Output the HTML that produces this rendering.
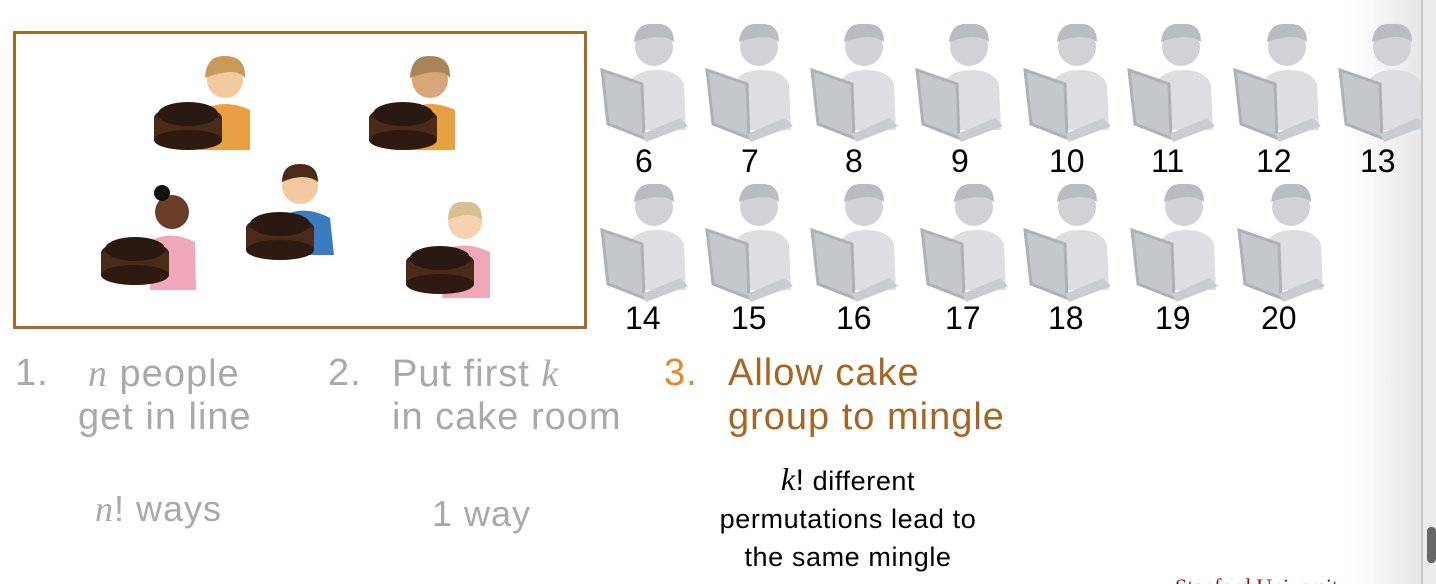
<!DOCTYPE html>
<html><head><meta charset="utf-8"><style>
html,body{margin:0;width:1436px;height:584px;overflow:hidden;background:#fff}
body{font-family:"Liberation Sans",sans-serif;position:relative}
.a{position:absolute;white-space:nowrap}
.box{position:absolute;left:13px;top:31px;width:568px;height:292px;border:3px solid #a86a28}
.g{color:#a9a9a9;font-size:38px;letter-spacing:1px}
.o{color:#e08a2e;font-size:38px;letter-spacing:1px}
.b{color:#a8651f;font-size:38px;letter-spacing:1px}
.num{font-size:32px;color:#000}
i{font-family:"Liberation Serif",serif}
</style></head><body>
<svg width="1436" height="584" style="position:absolute;left:0;top:0">
<defs>
<linearGradient id="gr" x1="0" x2="1"><stop offset="0" stop-color="#fff"/><stop offset="1" stop-color="#e6e6e6"/></linearGradient>
<g id="p">
<circle cx="4" cy="-45" r="19" fill="#d0d2d6"/>
<path d="M-16,-50 Q-14,-70 4,-68 Q24,-70 24,-50 Q12,-60 -16,-50Z" fill="#b9bcc1"/>
<path d="M-20,38 L-22,-8 Q-14,-22 6,-22 Q28,-22 34,-8 L36,38Z" fill="#dcdee1"/>
<path d="M-48,-22 L-8,-8 L-6,46 L-42,32Z" fill="#c4c7cc" stroke="#aeb1b6" stroke-width="3"/>
<path d="M-8,42 L30,26 L38,34 L-4,50Z" fill="#c9ccd0"/>
</g>
<g id="c">
<ellipse cx="0" cy="0" rx="34" ry="12" fill="#3a2216"/>
<rect x="-34" y="0" width="68" height="22" fill="#4a2a18"/>
<ellipse cx="0" cy="22" rx="34" ry="10" fill="#2e1a10"/>
<ellipse cx="0" cy="-4" rx="30" ry="12" fill="#2a1812"/>
</g>
</defs>
<rect x="1350" y="0" width="72" height="584" fill="url(#gr)"/>
<g transform="translate(650,92)"><use href="#p"/></g>
<g transform="translate(755,92)"><use href="#p"/></g>
<g transform="translate(860,92)"><use href="#p"/></g>
<g transform="translate(965,92)"><use href="#p"/></g>
<g transform="translate(1073,92)"><use href="#p"/></g>
<g transform="translate(1177,92)"><use href="#p"/></g>
<g transform="translate(1283,92)"><use href="#p"/></g>
<g transform="translate(1388,92)"><use href="#p"/></g>
<g transform="translate(650,252)"><use href="#p"/></g>
<g transform="translate(755,252)"><use href="#p"/></g>
<g transform="translate(860,252)"><use href="#p"/></g>
<g transform="translate(970,252)"><use href="#p"/></g>
<g transform="translate(1073,252)"><use href="#p"/></g>
<g transform="translate(1180,252)"><use href="#p"/></g>
<g transform="translate(1287,252)"><use href="#p"/></g>
<g>
<circle cx="225" cy="80" r="18" fill="#f3c9a0"/><path d="M205,78 Q206,55 225,56 Q246,56 245,78 Q236,66 205,78Z" fill="#c89a5a"/>
<path d="M200,150 L202,110 Q225,98 250,110 L250,150Z" fill="#e8a040"/>
<g transform="translate(188,118)"><use href="#c"/></g>
<circle cx="430" cy="80" r="18" fill="#d9a57a"/><path d="M410,78 Q411,55 430,56 Q451,56 450,78 Q441,66 410,78Z" fill="#a8865a"/>
<path d="M405,150 L407,110 Q430,98 455,110 L455,150Z" fill="#e8a040"/>
<g transform="translate(403,118)"><use href="#c"/></g>
<circle cx="172" cy="212" r="17" fill="#6a3e26"/><circle cx="162" cy="193" r="8" fill="#111"/>
<path d="M150,290 L152,240 Q172,230 195,242 L196,290Z" fill="#f0a8b8"/>
<g transform="translate(135,253)"><use href="#c"/></g>
<circle cx="300" cy="186" r="18" fill="#f3c9a0"/><path d="M282,182 Q282,164 300,164 Q318,164 318,182 Q305,172 282,182Z" fill="#4a2a18"/>
<path d="M280,255 L285,215 Q305,205 330,218 L334,255Z" fill="#3a7cc0"/>
<g transform="translate(280,228)"><use href="#c"/></g>
<circle cx="465" cy="222" r="17" fill="#f6d2b0"/><path d="M448,220 Q448,200 465,202 Q482,200 482,220 Q470,210 448,220Z" fill="#d8c090"/>
<path d="M442,298 L445,250 Q465,240 490,252 L490,298Z" fill="#f0a8b8"/>
<g transform="translate(440,262)"><use href="#c"/></g>
</g>
<rect x="1421" y="0" width="2" height="584" fill="#c8c8c8"/>
<rect x="1423" y="0" width="13" height="584" fill="#ececec"/>
<rect x="1427" y="527" width="9" height="36" rx="4" fill="#666"/>
</svg>
<div class="box"></div>
<div class="a num" style="left:635px;top:143px">6</div>
<div class="a num" style="left:741px;top:143px">7</div>
<div class="a num" style="left:845px;top:143px">8</div>
<div class="a num" style="left:951px;top:143px">9</div>
<div class="a num" style="left:1049px;top:143px">10</div>
<div class="a num" style="left:1151px;top:143px">11</div>
<div class="a num" style="left:1256px;top:143px">12</div>
<div class="a num" style="left:1360px;top:143px">13</div>
<div class="a num" style="left:625px;top:300px">14</div>
<div class="a num" style="left:731px;top:300px">15</div>
<div class="a num" style="left:836px;top:300px">16</div>
<div class="a num" style="left:945px;top:300px">17</div>
<div class="a num" style="left:1048px;top:300px">18</div>
<div class="a num" style="left:1155px;top:300px">19</div>
<div class="a num" style="left:1261px;top:300px">20</div>
<div class="a g" style="left:15px;top:352px">1.</div>
<div class="a g" style="left:88px;top:352px"><i>n</i> people</div>
<div class="a g" style="left:78px;top:396px">get in line</div>
<div class="a g" style="left:328px;top:352px">2.</div>
<div class="a g" style="left:392px;top:352px">Put first <i>k</i></div>
<div class="a g" style="left:392px;top:396px">in cake room</div>
<div class="a o" style="left:664px;top:352px">3.</div>
<div class="a b" style="left:728px;top:352px">Allow cake</div>
<div class="a b" style="left:728px;top:396px">group to mingle</div>
<div class="a g" style="left:95px;top:488px;font-size:36px"><i>n</i>! ways</div>
<div class="a g" style="left:432px;top:493px;font-size:36px">1 way</div>
<div class="a" style="left:680px;top:460px;width:336px;text-align:center;font-size:27px;letter-spacing:0.6px;line-height:38px;color:#000"><i style="font-size:32px">k</i><span style="font-size:30px">!</span> different<br>permutations lead to<br>the same mingle</div>
<div class="a" style="left:1175px;top:574px;font-family:'Liberation Serif',serif;font-size:22px;color:#8c1515">Stanford University</div>
</body></html>
